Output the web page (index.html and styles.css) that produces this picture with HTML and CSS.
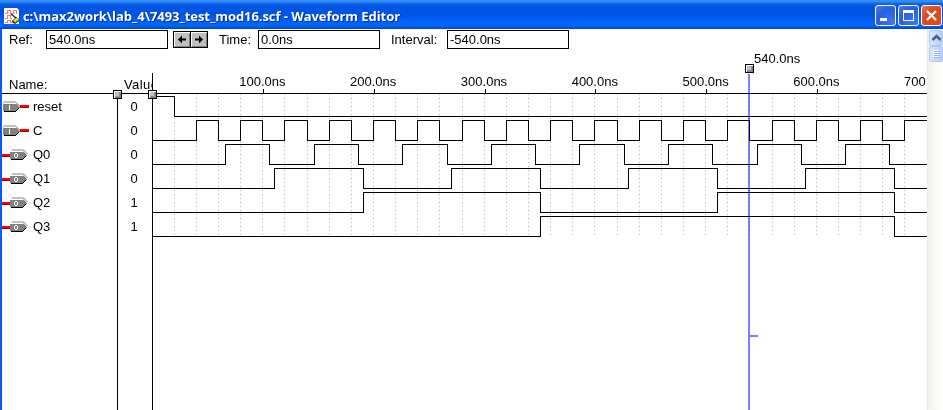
FILE: index.html
```html
<!DOCTYPE html>
<html lang="en">
<head>
<meta charset="utf-8">
<title>Waveform Editor</title>
<link rel="stylesheet" href="styles.css">
</head>
<body>
<svg class="defs" width="0" height="0">
  <symbol id="pin-in" viewBox="0 0 28 24" shape-rendering="crispEdges">
    <path fill="#c0c0c0" d="M2 6h12v1h1v1h1v1h1v1h1v1h1v1h-2v-1h-1v-1h-1v-1H1v-2h1z"/>
    <path fill="#808080" d="M1 9h14v1h1v1h1v1h1v1h-1v1h-1v1h-1v1H1z"/>
    <path d="M2 8.500h12" stroke="#fff"/>
    <path fill="#000" d="M2 16h12v-1h1v-1h1v-1h1v1h-1v1h-1v1h-1v1H2z"/>
    <path fill="#fff" d="M7 10h1v5h-1z"/>
    <path fill="red" d="M18 10h9v2h-9z"/><path fill="#a00000" d="M18 12h9v1h-9z"/>
  </symbol>
  <symbol id="pin-out" viewBox="0 0 28 24" shape-rendering="crispEdges">
    <path fill="#c0c0c0" d="M10 6h12v1h1v1h1v1h1v1h1v1h-1v1h-1v-1h-1v-1h-1v-1H9v-2h1z"/>
    <path fill="#808080" d="M8 9h14v1h1v1h1v1h1v1h-1v1h-1v1h-1v1H8z"/>
    <path d="M9 8.500h12" stroke="#fff"/>
    <path fill="#000" d="M9 16h12v-1h1v-1h1v-1h1v1h-1v1h-1v1h-1v1H9z"/>
    <path fill="#fff" d="M13 10h2v1h-2zM13 14h2v1h-2zM12 11h1v3h-1zM15 11h1v3h-1z"/>
    <path fill="red" d="M0 11h8v2H0z"/><path fill="#a00000" d="M0 13h8v1H0z"/>
  </symbol>
</svg>
<div class="window">
  <header class="titlebar">
    <svg class="app-icon" width="16" height="16" viewBox="0 0 16 16">
      <path fill="#fff" d="M0 0h13l2 2v14H0z"/>
      <path d="M1 5.500h2v-3h3v3h3v-3h3v3M1 10.500h2v-3h3v3h2M1 14.500h2v-2h3v2h4" fill="none" stroke="#f08080" shape-rendering="crispEdges"/>
      <path d="M7 6l5 4" stroke="#222" stroke-width="1.500"/>
      <path d="M9 15l-1-2 4-4 3 2v2l-4 3z" fill="#222"/>
      <path d="M10 13.500l4-3" stroke="#e8d820" stroke-width="3"/>
    </svg>
    <h1 class="title">c:\max2work\lab_4\7493_test_mod16.scf - Waveform Editor</h1>
    <div class="controls">
      <span class="ctl"><svg width="19" height="19"><path fill="#fff" d="M4 12h7v3H4z"/></svg></span>
      <span class="ctl"><svg width="19" height="19"><path fill="#fff" fill-rule="evenodd" d="M4 4h11v11H4zM5 7v7h9V7z"/></svg></span>
      <span class="ctl close"><svg width="19" height="19"><path d="M5 5l9 9M14 5l-9 9" stroke="#fff" stroke-width="2.200"/></svg></span>
    </div>
  </header>
  <div class="content">
    <main class="editor">
      <div class="toolbar">
        <span class="label ref">Ref:</span><span class="field">540.0ns</span>
        <span class="step first"><svg width="16" height="15"><path d="M4 7.500l4-4v3h4v2H8v3z"/></svg></span><span class="step"><svg width="16" height="15"><path d="M12 7.500l-4-4v3H4v2h4v3z"/></svg></span>
        <span class="label time">Time:</span><span class="field">0.0ns</span>
        <span class="label interval">Interval:</span><span class="field">-540.0ns</span>
      </div>
      <div class="cursor-row"><span class="cursor-time">540.0ns</span></div>
      <div class="table">
        <section class="names">
          <div class="head">Name:</div>
          <div class="rows">
            <div class="row"><svg class="pin"><use href="#pin-in"/></svg>reset</div>
            <div class="row"><svg class="pin"><use href="#pin-in"/></svg>C</div>
            <div class="row"><svg class="pin"><use href="#pin-out"/></svg>Q0</div>
            <div class="row"><svg class="pin"><use href="#pin-out"/></svg>Q1</div>
            <div class="row"><svg class="pin"><use href="#pin-out"/></svg>Q2</div>
            <div class="row"><svg class="pin"><use href="#pin-out"/></svg>Q3</div>
          </div>
          <i class="handle split"></i>
        </section>
        <section class="values">
          <div class="head">Value:</div>
          <div class="rows">
            <div class="row">0</div><div class="row">0</div><div class="row">0</div>
            <div class="row">0</div><div class="row">1</div><div class="row">1</div>
          </div>
          <i class="handle split"></i>
        </section>
        <section class="waves">
          <div class="ruler"><span>100.0ns</span><span>200.0ns</span><span>300.0ns</span><span>400.0ns</span><span>500.0ns</span><span>600.0ns</span><span>700.0ns</span></div>
          <svg class="plot" width="774" height="321" viewBox="153 89 774 321" shape-rendering="crispEdges">
            <path class="grid" d="M174.500 94V236M196.500 94V236M218.500 94V236M240.500 94V236M262.500 94V236M284.500 94V236M307.500 94V236M329.500 94V236M351.500 94V236M373.500 94V236M395.500 94V236M417.500 94V236M439.500 94V236M462.500 94V236M484.500 94V236M506.500 94V236M528.500 94V236M550.500 94V236M572.500 94V236M594.500 94V236M617.500 94V236M639.500 94V236M661.500 94V236M683.500 94V236M705.500 94V236M727.500 94V236M749.500 94V236M772.500 94V236M794.500 94V236M816.500 94V236M838.500 94V236M860.500 94V236M882.500 94V236M904.500 94V236"/>
            <g class="wave">
              <path d="M153 93.500H927M263.500 89v4M374.500 89v4M485.500 89v4M595.500 89v4M706.500 89v4M817.500 89v4"/>
              <path d="M153 96.500H174.500V116.500H927"/>
              <path d="M153 140.500H196.500V120.500H218.500V140.500H240.500V120.500H262.500V140.500H284.500V120.500H307.500V140.500H329.500V120.500H351.500V140.500H373.500V120.500H395.500V140.500H417.500V120.500H439.500V140.500H462.500V120.500H484.500V140.500H506.500V120.500H528.500V140.500H550.500V120.500H572.500V140.500H594.500V120.500H617.500V140.500H639.500V120.500H661.500V140.500H683.500V120.500H705.500V140.500H727.500V120.500H749.500V140.500H772.500V120.500H794.500V140.500H816.500V120.500H838.500V140.500H860.500V120.500H882.500V140.500H904.500V120.500H927"/>
              <path d="M153 164.500H225.500V144.500H269.500V164.500H314.500V144.500H358.500V164.500H402.500V144.500H447.500V164.500H491.500V144.500H535.500V164.500H579.500V144.500H624.500V164.500H668.500V144.500H712.500V164.500H757.500V144.500H801.500V164.500H845.500V144.500H889.500V164.500H927"/>
              <path d="M153 188.500H274.500V168.500H363.500V188.500H451.500V168.500H540.500V188.500H628.500V168.500H717.500V188.500H805.500V168.500H894.500V188.500H927"/>
              <path d="M153 212.500H363.500V192.500H540.500V212.500H717.500V192.500H894.500V212.500H927"/>
              <path d="M153 236.500H540.500V216.500H894.500V236.500H927"/>
            </g>
          </svg>
        </section>
      </div>
      <div class="cursor"><i class="handle"></i><i class="cursor-line"></i></div>
    </main>
    <aside class="scrollbar">
      <span class="sb up"><svg width="13" height="14"><path d="M2.500 9L6.500 5l4 4" fill="none" stroke="#4d6185" stroke-width="2.500"/></svg></span>
      <span class="sb thumb"><svg width="13" height="14" shape-rendering="crispEdges"><path d="M3 3.500h6M3 5.500h6M3 7.500h6M3 9.500h6" stroke="#fff"/><path d="M4 4.500h6M4 6.500h6M4 8.500h6M4 10.500h6" stroke="#8cb0f8"/></svg></span>
    </aside>
  </div>
</div>
</body>
</html>
```

FILE: styles.css
```css
* { box-sizing: border-box; }
body {
  margin: 0;
  background: #fff;
  color: #000;
  font: 13px/16px "Liberation Sans", Arial, sans-serif;
  overflow: hidden;
}
.defs { position: absolute; }
.window { width: 943px; height: 410px; display: flex; flex-direction: column; }

.titlebar {
  height: 29px;
  flex: none;
  display: flex;
  align-items: center;
  padding: 2px 1px 0 4px;
  background: linear-gradient(#3a93ff 0, #2a85f6 2px, #0a5ee8 4px, #0054e3 8px, #0055e5 15px, #0062fb 21px, #0066ff 25px, #005cf0 27px, #0040c0 29px);
}
.app-icon { flex: none; }
.title {
  margin: 0 0 0 3px;
  flex: 1;
  color: #fff;
  font: bold 13px/16px "Open Sans", "Noto Sans", sans-serif;
  letter-spacing: -0.06px;
  white-space: nowrap;
  text-shadow: 1px 1px 0 #0a2a90;
}
.controls { display: flex; gap: 2px; }
.ctl {
  width: 21px;
  height: 21px;
  border: 1px solid #fff;
  border-radius: 3px;
  background: radial-gradient(circle at 80% 85%, #3a78f8, #2a5fdc 60%, #4a7ee8);
}
.ctl svg { display: block; }
.close { background: radial-gradient(circle at 80% 85%, #e04a18, #dc4a24 60%, #e87858); }

.content { flex: 1; display: flex; border-left: 2px solid #0a5cf0; min-height: 0; }
.editor { flex: 1; min-width: 0; position: relative; display: flex; flex-direction: column; }

.toolbar { height: 20px; padding-top: 1px; display: flex; align-items: flex-start; }
.label { line-height: 19px; }
.ref { padding-left: 7px; width: 44px; }
.time { padding-left: 11px; width: 50px; }
.interval { padding-left: 11px; width: 67px; }
.field { width: 122px; height: 19px; border: 1px solid #000; padding-left: 2px; line-height: 17px; }
.step {
  width: 18px;
  height: 17px;
  margin-top: 1px;
  border: 1px solid #000;
  background: #c0c0c0;
  box-shadow: inset 1px 1px #fff, inset -1px -1px #808080;
}
.step svg { display: block; }
.step.first { margin-left: 5px; }
.step + .step { margin-left: -1px; }

.cursor-row { height: 24px; padding: 2px 0 0 752px; }
.table { flex: 1; display: grid; grid-template-columns: 116px 35px 1fr; min-height: 0; }
.names, .values { position: relative; display: flex; flex-direction: column; }
.head { height: 21px; flex: none; border-bottom: 1px solid #000; padding: 4px 0 0 7px; }
.values .head { padding-left: 6px; overflow: hidden; letter-spacing: 0.4px; }
.rows { flex: 1; padding-top: 1px; }
.names .rows, .values { border-right: 1px solid #000; }
.row { height: 24px; display: flex; align-items: center; }
.pin { width: 28px; height: 24px; margin-right: 3px; }
.values .row { justify-content: center; padding-right: 2px; }
.waves { overflow: hidden; }
.ruler { height: 16px; display: flex; margin-left: 54px; line-height: 18px; }
.ruler span { flex: 0 0 110.8px; text-align: center; }
.plot { display: block; }
.grid { fill: none; stroke: #b4b4b4; stroke-dasharray: 1 3; }
.wave { fill: none; stroke: #000; }

.handle {
  display: block;
  width: 9px;
  height: 9px;
  border: 1px solid #000;
  background: #c0c0c0;
  box-shadow: inset 1px 1px #fff, inset -1px -1px #808080, inset -2px -2px #909090;
}
.split { position: absolute; right: -4px; top: 17px; z-index: 1; }
.values .split { right: -5px; }

.cursor { position: absolute; left: 743px; top: 35px; bottom: 0; width: 13px; mix-blend-mode: multiply; }
.cursor-line { position: absolute; left: 3px; top: 10px; bottom: 0; width: 2px; background: #8080ff; }
.cursor-line::after { content: ""; position: absolute; left: 2px; top: 261px; width: 8px; height: 2px; background: #8080ff; }

.scrollbar {
  width: 16px;
  flex: none;
  display: flex;
  flex-direction: column;
  padding: 1px 0 0 1px;
  border-left: 1px solid #eeede5;
  background: linear-gradient(90deg, #f2f1ec, #fefefb);
}
.sb { width: 14px; height: 16px; border: 1px solid #b4c8f4; border-radius: 2px; background: linear-gradient(90deg, #dbe6ff, #b9cdfb); }
.sb svg { display: block; }
```
